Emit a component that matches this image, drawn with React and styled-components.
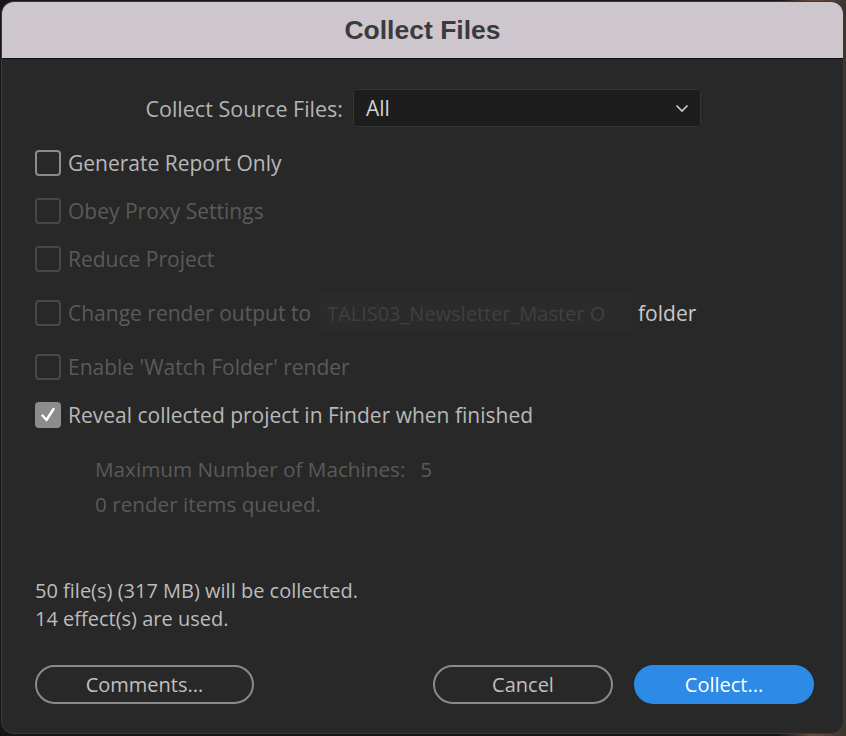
import React from "react";
import styled, { createGlobalStyle } from "styled-components";

const Global = createGlobalStyle`
  html, body {
    margin: 0;
    padding: 0;
    background: linear-gradient(90deg, #161616 0%, #161616 92%, #6a4a40 96%, #3a3430 100%);
    font-family: "Open Sans", "Noto Sans", sans-serif;
  }
`;

const options = [
  { label: "Generate Report Only", enabled: true },
  { label: "Obey Proxy Settings" },
  { label: "Reduce Project" },
];

function App() {
  return (
    <Page>
      <Global />
      <Dialog>
        <TitleBar>Collect Files</TitleBar>
        <Body>
          <SourceRow>
            <SourceLabel>Collect Source Files:</SourceLabel>
            <Select>
              <span>All</span>
              <svg width="14" height="9" viewBox="0 0 14 9">
                <path d="M1.5 1.5 L7 7 L12.5 1.5" fill="none" stroke="#cfcfcf" strokeWidth="1.6" />
              </svg>
            </Select>
          </SourceRow>

          <Options>
            {options.map((o) => (
              <CheckRow key={o.label}>
                <Box $enabled={o.enabled} />
                <Label $enabled={o.enabled}>{o.label}</Label>
              </CheckRow>
            ))}
            <CheckRow $tall>
              <Box />
              <Label>Change render output to</Label>
              <PathField>TALIS03_Newsletter_Master O</PathField>
              <FolderText>folder</FolderText>
            </CheckRow>
            <CheckRow>
              <Box />
              <Label>Enable 'Watch Folder' render</Label>
            </CheckRow>
            <CheckRow>
              <Box $enabled $checked>
                <svg width="18" height="18" viewBox="0 0 18 18">
                  <path d="M3.5 9.5 L7.5 14 L14.5 3" fill="none" stroke="#fff" strokeWidth="2.4" strokeLinecap="round" strokeLinejoin="round" />
                </svg>
              </Box>
              <Label $enabled>Reveal collected project in Finder when finished</Label>
            </CheckRow>
          </Options>

          <WatchInfo>
            <DimText>
              Maximum Number of Machines:<Gap />5
            </DimText>
            <DimText>0 render items queued.</DimText>
          </WatchInfo>

          <Summary>
            <div>50 file(s) (317 MB) will be collected.</div>
            <div>14 effect(s) are used.</div>
          </Summary>

          <Footer>
            <Button $wide>Comments...</Button>
            <RightButtons>
              <Button>Cancel</Button>
              <Button $primary>Collect...</Button>
            </RightButtons>
          </Footer>
        </Body>
      </Dialog>
    </Page>
  );
}

export default App;

const Page = styled.div`
  width: 846px;
  height: 736px;
  padding: 2px 3px 3px 2px;
  box-sizing: border-box;
`;

const Dialog = styled.div`
  height: 100%;
  background: #282828;
  border-radius: 12px;
  overflow: hidden;
  display: flex;
  flex-direction: column;
  box-shadow: 0 0 0 1px #3a3a3a;
`;

const TitleBar = styled.div`
  height: 56px;
  flex-shrink: 0;
  background: #cdc6cc;
  border-bottom: 1px solid #111;
  display: flex;
  align-items: center;
  justify-content: center;
  font-family: "Liberation Sans", Arial, sans-serif;
  font-weight: bold;
  font-size: 26.5px;
  color: #3b3a3c;
`;

const Body = styled.div`
  flex: 1;
  display: flex;
  flex-direction: column;
  padding: 30px 29px 29px 33px;
`;

const SourceRow = styled.div`
  display: flex;
  align-items: center;
  height: 38px;
`;

const SourceLabel = styled.div`
  width: 308px;
  text-align: right;
  font-size: 21.5px;
  color: #b4b4b4;
  margin-right: 10px;
  white-space: nowrap;
`;

const Select = styled.div`
  width: 348px;
  height: 38px;
  box-sizing: border-box;
  background: #1d1d1d;
  border: 1px solid #343434;
  border-radius: 4px;
  display: flex;
  align-items: center;
  justify-content: space-between;
  padding: 0 11px 0 12px;
  font-size: 21px;
  color: #d2d2d2;
`;

const Options = styled.div`
  display: flex;
  flex-direction: column;
  margin-top: 12px;
`;

const CheckRow = styled.div`
  display: flex;
  align-items: center;
  height: ${(p) => (p.$tall ? 60 : 48)}px;
`;

const Box = styled.div`
  width: 26px;
  height: 26px;
  box-sizing: border-box;
  border-radius: 4px;
  border: 2px solid ${(p) => (p.$enabled ? "#8c8c8c" : "#474747")};
  background: ${(p) => (p.$checked ? "#8c8c8c" : "transparent")};
  display: flex;
  align-items: center;
  justify-content: center;
  margin-right: 7px;
  flex-shrink: 0;
`;

const Label = styled.div`
  font-size: 21px;
  color: ${(p) => (p.$enabled ? "#b8b8b8" : "#5a5a5a")};
  white-space: nowrap;
`;

const PathField = styled.div`
  margin-left: 8px;
  width: 312px;
  height: 38px;
  box-sizing: border-box;
  background: #2b2b2b;
  padding-left: 8px;
  display: flex;
  align-items: center;
  font-size: 20px;
  color: #404040;
  white-space: nowrap;
  overflow: hidden;
`;

const FolderText = styled.div`
  margin-left: 7px;
  font-size: 21px;
  color: #c8c8c8;
`;

const WatchInfo = styled.div`
  display: flex;
  flex-direction: column;
  gap: 7px;
  padding-left: 60px;
  margin-top: 16px;
`;

const DimText = styled.div`
  font-size: 20.7px;
  line-height: 28px;
  color: #5a5a5a;
  display: flex;
  white-space: nowrap;
`;

const Gap = styled.span`
  width: 15px;
`;

const Summary = styled.div`
  margin-top: auto;
  font-size: 20px;
  line-height: 28px;
  color: #bcbcbc;
`;

const Footer = styled.div`
  margin-top: 32px;
  display: flex;
  justify-content: space-between;
`;

const RightButtons = styled.div`
  display: flex;
  gap: 21px;
`;

const Button = styled.button`
  width: ${(p) => (p.$wide ? 219 : 180)}px;
  height: 39px;
  border-radius: 20px;
  border: 2px solid ${(p) => (p.$primary ? "#2d8ae6" : "#8a8a8a")};
  background: ${(p) => (p.$primary ? "#2d8ae6" : "transparent")};
  color: ${(p) => (p.$primary ? "#ffffff" : "#c0c0c0")};
  font-family: "Open Sans", "Noto Sans", sans-serif;
  font-size: 20px;
  padding: 0;
`;
